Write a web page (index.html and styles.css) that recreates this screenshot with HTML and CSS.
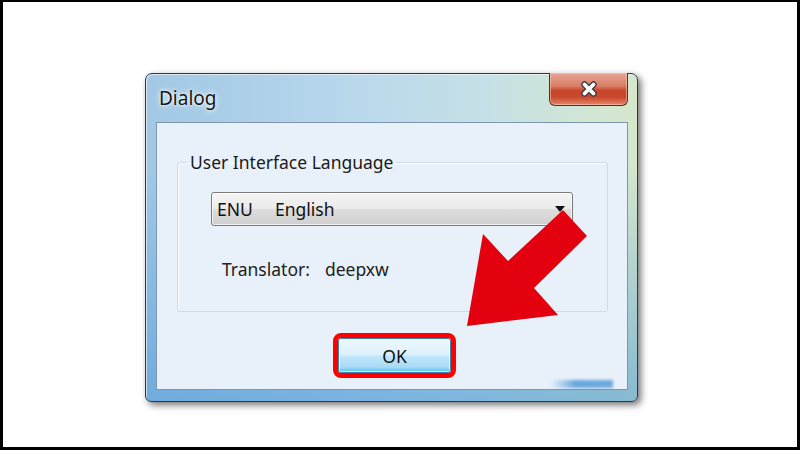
FILE: index.html
```html
<!DOCTYPE html>
<html lang="en">
<head>
    <meta charset="UTF-8">
    <title>Dialog</title>
    <link rel="stylesheet" href="styles.css">
</head>
<body>
    <div class="window">
        <div class="titlebar">
            <span class="title">Dialog</span>
            <button class="close-button">
                <svg width="16" height="16" viewBox="0 0 16 16">
                    <path d="M3.5 3.5 L12.5 12.5 M12.5 3.5 L3.5 12.5" stroke="#3b3b4a" stroke-width="6.4" stroke-linecap="round"/>
                    <path d="M3.5 3.5 L12.5 12.5 M12.5 3.5 L3.5 12.5" stroke="#ffffff" stroke-width="3.8" stroke-linecap="round"/>
                </svg>
            </button>
        </div>
        <div class="client">
            <fieldset class="group">
                <legend>User Interface Language</legend>
                <div class="combo">
                    <span class="combo-code">ENU</span>
                    <span class="combo-name">English</span>
                    <span class="combo-caret"></span>
                </div>
                <div class="translator">
                    <span>Translator:</span>
                    <span class="translator-name">deepxw</span>
                </div>
            </fieldset>
            <div class="actions">
                <button class="ok-button">OK</button>
            </div>
            <div class="grip"></div>
        </div>
    </div>

    <svg class="arrow" width="135" height="125" viewBox="460 205 135 125">
        <polygon points="467,326 483,234 508,261 563,210 587,236 534,288 558,315" fill="#e3000f"/>
    </svg>
</body>
</html>
```

FILE: styles.css
```css
body {
    margin: 0;
    width: 800px;
    height: 450px;
    box-sizing: border-box;
    padding: 73px 0 0 145px;
    position: relative;
    overflow: hidden;
    background-color: #fff;
    box-shadow: inset 3px 2px 0 #000, inset -3px -3px 0 #000;
    font-family: "Noto Sans", "DejaVu Sans", sans-serif;
    color: #1b1b1b;
}

.window {
    width: 493px;
    height: 329px;
    box-sizing: border-box;
    display: flex;
    flex-direction: column;
    padding: 0 9px 11px 10px;
    border: 1px solid #2c3a47;
    border-radius: 7px 7px 6px 6px;
    background:
        linear-gradient(180deg, rgba(80, 155, 215, 0) 0, rgba(80, 155, 215, 0) 90px, rgba(70, 148, 214, 0.55) 100%),
        linear-gradient(90deg, #a2c8e5 0%, #b7d7ec 40%, #c6e1e6 70%, #d6e7cb 100%);
    box-shadow: 3px 3px 7px rgba(0, 0, 0, 0.55), inset 1px 1px 0 rgba(255, 255, 255, 0.6);
}

.titlebar {
    height: 48px;
    display: flex;
    justify-content: space-between;
    align-items: flex-start;
}

.title {
    padding: 12px 0 0 3px;
    font-size: 19px;
    line-height: 24px;
    color: #161616;
    text-shadow: 0 0 6px #fff, 0 0 3px #fff;
}

.close-button {
    width: 79px;
    height: 33px;
    margin: -1px 0 0 0;
    padding: 0;
    display: flex;
    align-items: center;
    justify-content: center;
    border: 1px solid #5b2a20;
    border-top: none;
    border-radius: 0 0 6px 6px;
    background: linear-gradient(180deg, #e7a593 0%, #d98067 40%, #c8462a 55%, #c9472a 75%, #e5866a 100%);
    box-shadow: inset 0 0 0 1px rgba(255, 210, 190, 0.55);
}

.client {
    flex: 1;
    position: relative;
    display: flex;
    flex-direction: column;
    padding: 0 19px 0 20px;
    border: 1px solid #7f97ae;
    background-color: #e8f0f9;
}

.group {
    margin: 28px 0 0 0;
    padding: 0 0 22px 33px;
    height: 137px;
    border: 1px solid #d2dbe3;
    border-radius: 3px;
    box-shadow: inset 1px 1px 0 #fbfdff;
}

.group legend {
    margin-left: -24px;
    padding: 0 3px;
    font-size: 17.5px;
    line-height: 22px;
    color: #1b1b1b;
}

.combo {
    width: 362px;
    height: 34px;
    box-sizing: border-box;
    margin-top: 19px;
    display: flex;
    align-items: center;
    padding: 0 7px 0 5px;
    border: 1px solid #7a7a7a;
    border-radius: 3px;
    background: linear-gradient(180deg, #f4f4f4 0%, #ebebeb 48%, #dddddd 52%, #cfcfcf 100%);
    box-shadow: inset 0 0 0 1px rgba(255, 255, 255, 0.7);
    font-size: 17.5px;
    color: #111;
}

.combo-code {
    width: 58px;
}

.combo-caret {
    margin-left: auto;
    width: 0;
    height: 0;
    border-left: 5px solid transparent;
    border-right: 5px solid transparent;
    border-top: 6px solid #111;
}

.translator {
    margin: 32px 0 0 11px;
    display: flex;
    gap: 15px;
    font-size: 17.5px;
    line-height: 22px;
    color: #222;
}

.actions {
    display: flex;
    justify-content: center;
    padding: 26px 0 0 4px;
}

.ok-button {
    width: 113px;
    height: 35px;
    padding: 0;
    border: 1px solid #3c7fb1;
    border-radius: 3px;
    background: linear-gradient(180deg, #edf7fd 0%, #dcf1fc 48%, #c0e7fc 52%, #a9daf6 85%, #4fc4f0 100%);
    box-shadow: inset 0 0 0 1px rgba(255, 255, 255, 0.7);
    outline: 5px solid #ff0000;
    font-family: "Noto Sans", "DejaVu Sans", sans-serif;
    font-size: 17.5px;
    color: #111;
}

.grip {
    position: absolute;
    right: 14px;
    bottom: 1px;
    width: 62px;
    height: 8px;
    background: linear-gradient(90deg, rgba(90, 160, 220, 0) 0%, rgba(70, 150, 215, 0.8) 40%, rgba(60, 140, 210, 0.7) 100%);
    filter: blur(1.5px);
}

.arrow {
    position: absolute;
    left: 460px;
    top: 205px;
}
```
